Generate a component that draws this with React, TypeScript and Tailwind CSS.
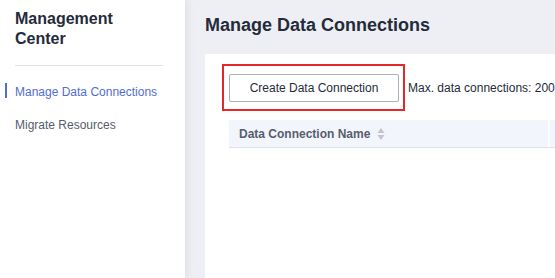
import React from "react";

export default function App() {
  return (
    <div
      className="flex h-[278px] w-[555px] overflow-hidden bg-[#eeeff4] text-[#252b3a]"
      style={{ fontFamily: '"Liberation Sans", Arial, sans-serif' }}
    >
      <aside className="relative z-10 w-[185px] shrink-0 bg-white shadow-[2px_0_8px_rgba(0,0,0,0.07)]">
        <div className="pl-[15px] pr-[22px] pt-[9px]">
          <h1 className="text-[16px] font-bold leading-[20px] text-[#252b3a]">
            Management
            <br />
            Center
          </h1>
          <div className="mt-[16px] h-px bg-[#dfe1e6]" />
        </div>
        <nav className="mt-[9px]">
          <div className="relative flex h-[33px] items-center pl-[15px] text-[12px] text-[#526ecc]">
            <span className="absolute left-[5px] top-[8px] h-[15px] w-[2px] bg-[#526ecc]" />
            Manage Data Connections
          </div>
          <div className="flex h-[33px] items-center pl-[15px] text-[12px] text-[#575d6c]">
            Migrate Resources
          </div>
        </nav>
      </aside>

      <main className="min-w-0 flex-1 pl-[20px]">
        <h2 className="pt-[13px] text-[18px] font-bold leading-[24px] text-[#252b3a] whitespace-nowrap">
          Manage Data Connections
        </h2>
        <div className="mt-[17px] h-[300px] bg-white pt-[10px]">
          <div className="flex items-center pl-[17px]">
            <div className="border-2 border-[#e5262b] pb-[7px] pl-[5px] pr-[4px] pt-[8px]">
              <button className="flex h-[28px] w-[170px] items-center justify-center rounded-[2px] border border-[#adb0b8] bg-white text-[12px] text-[#252b3a]">
                Create Data Connection
              </button>
            </div>
            <span className="ml-[3px] whitespace-nowrap text-[12px] text-[#252b3a]">
              Max. data connections: 200
            </span>
          </div>
          <div className="ml-[24px] mt-[9px] flex h-[28px] w-[400px] border-b border-[#dfe1e6] bg-[#f3f5fc]">
            <div className="flex w-[319px] shrink-0 items-center pl-[10px] text-[12px] font-bold text-[#575d6c] whitespace-nowrap">
              Data Connection Name
              <svg className="ml-[7px]" width="8" height="14" viewBox="0 0 8 14">
                <path d="M4 1 L7.5 6 L0.5 6 Z" fill="#c0c4cc" />
                <path d="M4 13 L7.5 8 L0.5 8 Z" fill="#c0c4cc" />
              </svg>
            </div>
            <div className="w-[2px] shrink-0 bg-white" />
            <div className="flex-1" />
          </div>
        </div>
      </main>
    </div>
  );
}
